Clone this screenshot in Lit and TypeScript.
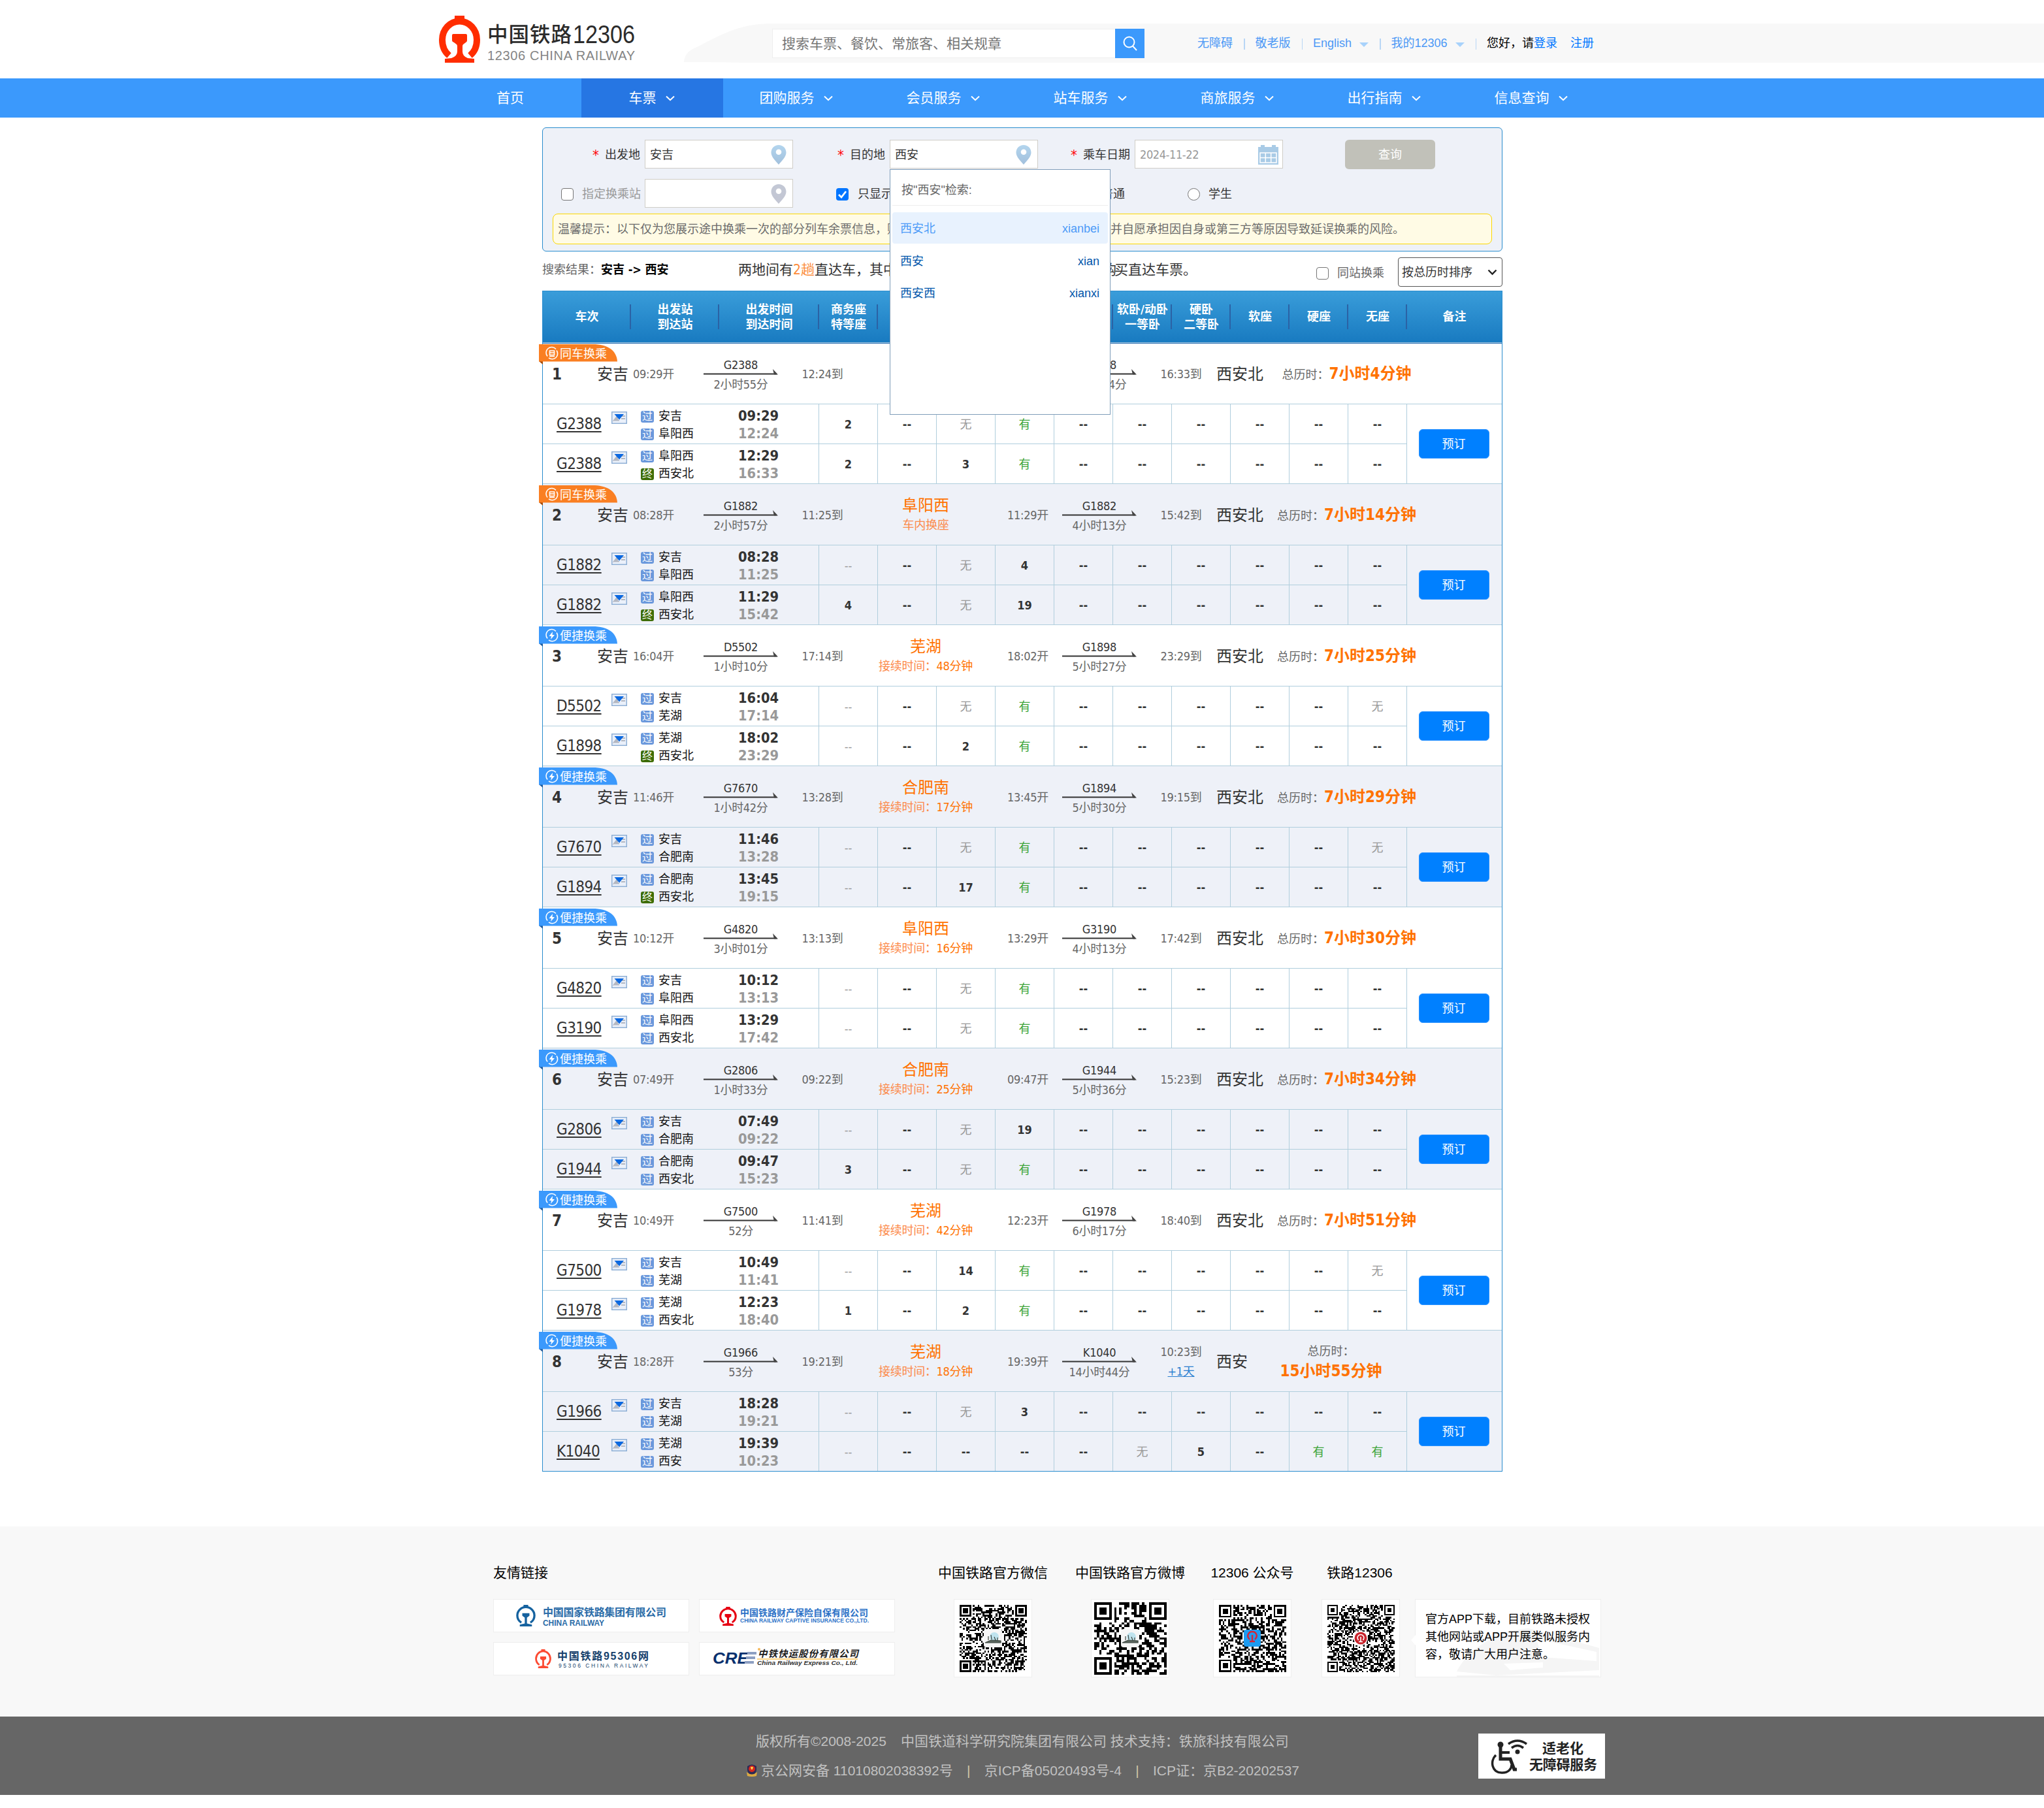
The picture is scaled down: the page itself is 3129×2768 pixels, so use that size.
import { LitElement, html, svg, css, nothing } from "lit";
import { customElement } from "lit/decorators.js";
import { classMap } from "lit/directives/class-map.js";

interface Leg {
  code: string;
  from: string;
  to: string;
  dep: string;
  arr: string;
  dur: string;
  end?: boolean;
  seats: string;
}
interface Plan {
  same?: boolean;
  via: string;
  wait: string;
  total: string;
  dest: string;
  nextDay?: boolean;
  legs: [Leg, Leg];
}

const leg = (code: string, from: string, to: string, dep: string, arr: string, dur: string, seats: string, end = false): Leg =>
  ({ code, from, to, dep, arr, dur, seats, end });

// Seat strings: "-" none, "~" faded none, "x" sold out, "o" plenty, otherwise a count.
const plans: Plan[] = [
  { same: true, via: "阜阳西", wait: "", total: "7小时4分钟", dest: "西安北", legs: [
    leg("G2388", "安吉", "阜阳西", "09:29", "12:24", "2小时55分", "2 - x o - - - - - -"),
    leg("G2388", "阜阳西", "西安北", "12:29", "16:33", "4小时04分", "2 - 3 o - - - - - -", true)] },
  { same: true, via: "阜阳西", wait: "", total: "7小时14分钟", dest: "西安北", legs: [
    leg("G1882", "安吉", "阜阳西", "08:28", "11:25", "2小时57分", "~ - x 4 - - - - - -"),
    leg("G1882", "阜阳西", "西安北", "11:29", "15:42", "4小时13分", "4 - x 19 - - - - - -", true)] },
  { via: "芜湖", wait: "48分钟", total: "7小时25分钟", dest: "西安北", legs: [
    leg("D5502", "安吉", "芜湖", "16:04", "17:14", "1小时10分", "~ - x o - - - - - x"),
    leg("G1898", "芜湖", "西安北", "18:02", "23:29", "5小时27分", "~ - 2 o - - - - - -", true)] },
  { via: "合肥南", wait: "17分钟", total: "7小时29分钟", dest: "西安北", legs: [
    leg("G7670", "安吉", "合肥南", "11:46", "13:28", "1小时42分", "~ - x o - - - - - x"),
    leg("G1894", "合肥南", "西安北", "13:45", "19:15", "5小时30分", "~ - 17 o - - - - - -", true)] },
  { via: "阜阳西", wait: "16分钟", total: "7小时30分钟", dest: "西安北", legs: [
    leg("G4820", "安吉", "阜阳西", "10:12", "13:13", "3小时01分", "~ - x o - - - - - -"),
    leg("G3190", "阜阳西", "西安北", "13:29", "17:42", "4小时13分", "~ - x o - - - - - -")] },
  { via: "合肥南", wait: "25分钟", total: "7小时34分钟", dest: "西安北", legs: [
    leg("G2806", "安吉", "合肥南", "07:49", "09:22", "1小时33分", "~ - x 19 - - - - - -"),
    leg("G1944", "合肥南", "西安北", "09:47", "15:23", "5小时36分", "3 - x o - - - - - -")] },
  { via: "芜湖", wait: "42分钟", total: "7小时51分钟", dest: "西安北", legs: [
    leg("G7500", "安吉", "芜湖", "10:49", "11:41", "52分", "~ - 14 o - - - - - x"),
    leg("G1978", "芜湖", "西安北", "12:23", "18:40", "6小时17分", "1 - 2 o - - - - - -")] },
  { via: "芜湖", wait: "18分钟", total: "15小时55分钟", dest: "西安", nextDay: true, legs: [
    leg("G1966", "安吉", "芜湖", "18:28", "19:21", "53分", "~ - x 3 - - - - - -"),
    leg("K1040", "芜湖", "西安", "19:39", "10:23", "14小时44分", "~ - - - - x 5 - o o")] },
];

const emblem = (color: string, w: number, h: number) => html`
  <svg width=${w} height=${h} viewBox="0 0 63 73" preserveAspectRatio="none" fill=${color}>
    <path d="M24 0h15v5l4 4H20l4-4z" />
    <path d="M15.500 61C7 54 5 45 5 37C5 21 17 8.500 31.500 8.500S58 21 58 37C58 45 56 54 47.500 61" fill="none" stroke=${color} stroke-width="10" />
    <path d="M22 28h19q2 0 2 2v8q0 2-2 3l-4 3q-1 1-1 3v8q0 7 8 10l10 1v6H9v-6l10-1q9-3 9-10v-8q0-2-1-3l-4-3q-3-1-3-3v-8q0-2 2-2z" />
  </svg>`;

const pin = (a: string, b: string, id: string) => html`
  <svg class="pin" width="24" height="30" viewBox="0 0 24 30">
    <defs><linearGradient id=${id} x1="0" y1="0" x2="0" y2="1"><stop offset="0" stop-color=${a} /><stop offset="1" stop-color=${b} /></linearGradient></defs>
    <path fill="url(#${id})" fill-rule="evenodd" d="M12 0C5.500 0 .5 5 .5 11.500C.5 18 7 24 12 30C17 24 23.500 18 23.500 11.500C23.500 5 18.500 0 12 0zM12 6.500a4.300 4.300 0 1 1 0 8.600a4.300 4.300 0 0 1 0-8.600z" />
  </svg>`;

const chevron = html`<svg width="14" height="9" viewBox="0 0 14 9" fill="none" stroke="#fff" stroke-width="2"><path d="M1 1.500L7 7.200L13 1.500" /></svg>`;

function qrCells(n: number, seed: number) {
  let s = seed;
  const rnd = () => ((s = (s * 1103515245 + 12345) & 0x7fffffff) >> 8) / 0x7fffff;
  let d = "";
  const clear = (x: number, y: number) => (x < 8 && y < 8) || (x >= n - 8 && y < 8) || (x < 8 && y >= n - 8);
  for (let y = 0; y < n; y++)
    for (let x = 0; x < n; x++) {
      const on = rnd() < 0.52;
      if (on && !clear(x, y)) d += `M${x} ${y}h1v1h-1z`;
    }
  for (const [x, y] of [[0, 0], [n - 7, 0], [0, n - 7]])
    d += `M${x} ${y}h7v7h-7zM${x + 1} ${y + 1}v5h5v-5zM${x + 2} ${y + 2}h3v3h-3z`;
  return d;
}

const qr = (n: number, seed: number, size: number, logo: unknown) => html`
  <svg width=${size} height=${size} viewBox="0 0 ${size} ${size}">
    <path transform="scale(${size / n})" d=${qrCells(n, seed)} shape-rendering="crispEdges" />
    ${logo}
  </svg>`;

const sceneLogo = (c: number) => svg`
  <rect x=${c - 14} y=${c - 14} width="28" height="28" rx="4" fill="#f6f6f6" />
  <circle cx=${c + 2} cy=${c - 2} r="7" fill="#bfe3ee" />
  <path transform="translate(${c - 12} ${c - 5})" d="M0 12L9 8L24 9V12zM5 2v6M9 0l1 7M14 3l2 5M19 4v4" fill="#58645c" stroke="#3c4640" stroke-width="1.200" />`;
const appLogo = (c: number) => svg`
  <rect x=${c - 13} y=${c - 13} width="26" height="26" rx="4" fill="#1c9cf2" />
  <path transform="translate(${c - 8} ${c - 11})" d="M4 13C-2 7 3 1 8 1S18 7 12 13M8 6v9M4 16h8" fill="none" stroke="#d3263a" stroke-width="2.400" />`;
const roundLogo = (c: number) => svg`
  <circle cx=${c} cy=${c} r="11" fill="#fff" /><circle cx=${c} cy=${c} r="9.500" fill="#c8232c" />
  <path transform="translate(${c - 6} ${c - 6})" d="M2.500 9C-1 4 3 .5 6 .5S13 4 9.500 9M6 4v7M3 11.500h6" fill="none" stroke="#fff" stroke-width="1.600" />`;

@customElement("top-bar")
class TopBar extends LitElement {
  static styles = css`
    :host { display: block; font-family: "Liberation Sans", "Noto Sans CJK SC", sans-serif; }
    .head { height: 120px; display: flex; padding-left: 672px; box-sizing: border-box; position: relative; background: #fff; }
    .logo { display: flex; padding-top: 24px; gap: 11px; width: 375px; }
    .narrow { font-family: "Liberation Sans Narrow", "Liberation Sans", sans-serif; }
    .band { flex: 1; height: 60px; margin-top: 36px; display: flex; align-items: center; position: relative; }
    .bandbg { position: absolute; inset: 0; width: 100%; height: 60px; }
    .search { position: relative; margin-left: 135px; display: flex; height: 45px; margin-top: 1px; }
    .q { width: 525px; box-sizing: border-box; background: #fff; border: 1px solid #eee; border-right: 0; font-size: 21px; line-height: 43px; color: #757575; padding-left: 14px; white-space: nowrap; }
    .go { width: 45px; background: #3b99fc; display: flex; align-items: center; justify-content: center; }
    .links { position: relative; display: flex; align-items: center; margin-left: 81px; font-size: 18px; line-height: 24px; color: #4c98f6; white-space: nowrap; }
    .sep { width: 1.500px; height: 17px; background: #b8d6f5; margin: 2px 16px 0 17px; }
    .tri { border: 7px solid transparent; border-top-color: #a8d2fb; border-bottom: 0; margin-left: 12px; margin-top: 4px; }
    .hi { color: #000; }
    .act { color: #0077ff; }
    .reg { margin-left: 20px; color: #0077ff; }
    .nav { height: 60px; background: #3b99fc; display: grid; grid-template-columns: 220px 217px repeat(6, 225px); padding-left: 670px; }
    .item { display: flex; align-items: center; justify-content: center; gap: 14px; color: #fff; font-size: 21px; line-height: 60px; white-space: nowrap; padding-right: 2px; }
    .item:first-child { padding: 0 0 0 2px; }
    .on { background: #2676e3; }
  `;
  render() {
    const items = ["首页", "车票", "团购服务", "会员服务", "站车服务", "商旅服务", "出行指南", "信息查询"];
    return html`
      <div class="head">
        <div class="logo">
          ${emblem("#ff2d00", 63, 73)}
          <svg width="230" height="73" viewBox="0 0 230 73">
            <text x="0" y="40" font-size="31.500" font-weight="500" textLength="129" fill="#2b2b2b">中国铁路</text>
            <text class="narrow" x="131" y="41.500" font-size="38" textLength="95" lengthAdjust="spacingAndGlyphs" fill="#2b2b2b">12306</text>
            <text class="narrow" x="0" y="67.500" font-size="20" textLength="226" fill="#858585">12306 CHINA RAILWAY</text>
          </svg>
        </div>
        <div class="band">
          <svg class="bandbg" viewBox="0 0 2082 60" preserveAspectRatio="none"><path fill="#f8f8f8" d="M0 59C2 42 12 40 24 34C62 14 90 0 134 0H2082V60H90Q40 59 0 59z" /></svg>
          <div class="search">
            <div class="q">搜索车票、餐饮、常旅客、相关规章</div>
            <div class="go"><svg width="22" height="23" viewBox="0 0 22 23" fill="none" stroke="#fff" stroke-width="2"><circle cx="9.500" cy="9.500" r="8" /><path d="M15 15.500L21 22" /></svg></div>
          </div>
          <div class="links">
            <span>无障碍</span><i class="sep"></i><span>敬老版</span><i class="sep"></i><span>English</span><i class="tri"></i><i class="sep"></i>
            <span>我的12306</span><i class="tri"></i><i class="sep"></i>
            <span class="hi">您好，请</span><span class="act">登录</span><span class="reg">注册</span>
          </div>
        </div>
      </div>
      <div class="nav">
        ${items.map((t, i) => html`<div class=${classMap({ item: true, on: i === 1 })}>${t}${i ? chevron : nothing}</div>`)}
      </div>`;
  }
}

@customElement("search-form")
class SearchForm extends LitElement {
  static styles = css`
    :host { display: block; position: relative; z-index: 5; font: 18px/24px "DejaVu Sans Condensed", "Noto Sans CJK SC", sans-serif; color: #333; }
    .box { box-sizing: border-box; height: 190px; border: 1px solid #298cce; border-radius: 6px; background: #eef1f8; padding-top: 18px; }
    .row { display: flex; align-items: center; height: 44px; margin-bottom: 16px; white-space: nowrap; }
    .row > span { flex: none; padding-top: 1px; }
    .lab { width: 148px; box-sizing: border-box; padding: 1px 7px 0 0; text-align: right; flex: none; }
    .lab.first { width: 156px; }
    .lab i { color: #f00; font-style: normal; margin-right: 9px; font-size: 22px; line-height: 20px; vertical-align: -2px; }
    .inp { width: 227px; height: 44px; flex: none; box-sizing: border-box; border: 1px solid #cfcdc7; background: #fff; display: flex; align-items: center; justify-content: space-between; padding: 1px 9px 0 7px; font-family: "Liberation Sans", "Noto Sans CJK SC", sans-serif; position: relative; }
    .date { color: #999; padding-right: 6px; font-family: "DejaVu Sans Condensed", sans-serif; letter-spacing: -.4px; }
    .query { width: 138px; height: 45px; line-height: 46px; border-radius: 6px; background: #c1c1b9; color: #fff; text-align: center; margin-left: 95px; }
    .cb { width: 19px; height: 19px; box-sizing: border-box; border: 1.500px solid #767676; border-radius: 4px; background: #fff; flex: none; margin-top: 2px; }
    .cb.on { background: #0075ff; border: 0; }
    .cb.on svg { display: block; }
    .cb.rd { border-radius: 50%; }
    .dim { color: #999; }
    .tip { box-sizing: border-box; height: 47px; margin: -7px 15px 0; border: 1px solid #fbd800; border-radius: 8px; background: #fffbe5; line-height: 46px; padding-left: 7px; color: #6b6b6b; white-space: nowrap; overflow: hidden; }
    .res { height: 60px; display: flex; align-items: center; white-space: nowrap; color: #666; }
    .res b { color: #000; }
    .res > * { flex: none; }
    .sum { font-size: 21px; color: #333; display: flex; }
    .or { color: #fc8b3a; }
    .mid { width: 459px; }
    .sel { box-sizing: border-box; width: 160px; height: 45px; border: 1px solid #555; border-radius: 4px; color: #333; font-family: "Liberation Sans", "Noto Sans CJK SC", sans-serif; display: flex; align-items: center; justify-content: space-between; padding: 0 7px 0 5px; }
    .drop { position: absolute; left: -1px; top: 44px; width: 338px; height: 376px; box-sizing: border-box; border: 1px solid #7f9db9; background: #fff; padding: 0 3px; color: #0055aa; }
    .dt { height: 54px; line-height: 62px; padding-left: 14px; color: #666; border-bottom: 1px solid #eee; margin-bottom: 10px; }
    .opt { height: 48px; line-height: 50px; margin-bottom: 1.500px; display: flex; justify-content: space-between; padding: 0 13px 0 12px; border-radius: 4px; }
    .opt.hl { background: #e8f2fe; color: #4c9bf8; }
  `;
  render() {
    const drop = html`<div class="drop">
      <div class="dt">按"西安"检索:</div>
      <div class="opt hl"><span>西安北</span><span>xianbei</span></div>
      <div class="opt"><span>西安</span><span>xian</span></div>
      <div class="opt"><span>西安西</span><span>xianxi</span></div>
    </div>`;
    const blue = (id: string) => pin("#b3d5ee", "#a2c0dc", id);
    return html`
      <div class="box">
        <div class="row">
          <div class="lab first"><i>*</i>出发地</div><div class="inp"><span>安吉</span>${blue("p1")}</div>
          <div class="lab"><i>*</i>目的地</div><div class="inp"><span>西安</span>${blue("p2")}${drop}</div>
          <div class="lab"><i>*</i>乘车日期</div>
          <div class="inp date"><span>2024-11-22</span>
            <svg width="31" height="30" viewBox="0 0 31 30"><path fill="#a9cbe6" d="M0 3h4V0h6v3h11V0h6v3h4v27H0z" /><g fill="none" stroke="#fff" stroke-width="1.500"><path d="M3 12h25v15H3zM11.300 12v15M19.700 12v15M3 19.500h25" /></g></svg>
          </div>
          <div class="query">查询</div>
        </div>
        <div class="row">
          <i class="cb" style="margin-left:28px"></i><span class="dim" style="width:95px;margin-left:13px">指定换乘站</span>
          <div class="inp" style="margin-left:1px"><span></span>${pin("#c3c8d5", "#c3c6d3", "p3")}</div>
          <i class="cb on" style="margin-left:66px"><svg width="19" height="19" viewBox="0 0 19 19" fill="none" stroke="#fff" stroke-width="2.800"><path d="M4 10l4 4l7-9" /></svg></i>
          <span style="margin-left:14px;width:341px">只显示余票充足的车次</span>
          <i class="cb rd"></i><span style="margin-left:13px;width:132px">普通</span>
          <i class="cb rd"></i><span style="margin-left:13px">学生</span>
        </div>
        <div class="tip">温馨提示：以下仅为您展示途中换乘一次的部分列车余票信息，购票前请您仔细阅读并确认换乘时间充裕，并自愿承担因自身或第三方等原因导致延误换乘的风险。</div>
      </div>
      <div class="res">
        <div style="width:300px;margin-top:-5px">搜索结果：<b>安吉 -&gt; 西安</b></div>
        <div class="sum" style="margin-top:-5px;width:885px"><span>两地间有<span class="or">2趟</span></span><span class="mid">直达车，其中部分车次仍有余票，您也可以优先购</span><span>买直达车票。</span></div>
        <i class="cb" style="margin-top:6px"></i><span style="margin:6px 0 0 13px;width:93px">同站换乘</span>
        <div class="sel" style="margin-top:3px">按总历时排序<svg width="15" height="10" viewBox="0 0 15 10" fill="none" stroke="#222" stroke-width="2.400"><path d="M1.500 1.500L7.500 7.500L13.500 1.500" /></svg></div>
      </div>`;
  }
}

@customElement("result-table")
class ResultTable extends LitElement {
  static styles = css`
    :host { display: block; font: 18px/24px "DejaVu Sans Condensed", "Noto Sans CJK SC", sans-serif; color: #333; }
    .table { box-sizing: border-box; border: 1px solid #298cce; border-top: 0; border-bottom: 0; }
    .thead { height: 80px; display: grid; grid-template-columns: 135px 135px 153px repeat(10, 90px) 1fr; background: linear-gradient(#3a9dda, #187ac0); position: relative; color: #fff; font-weight: bold; line-height: 22.500px; text-align: center; box-shadow: inset 0 1px #298cce; }
    .thead::after { content: ""; position: absolute; z-index: 1; left: 0; right: 0; bottom: -1px; height: 1px; background: #1a62a8; border-top: 1px solid #a6cde6; }
    .h { display: flex; align-items: center; justify-content: center; white-space: pre; position: relative; padding-top: 1px; }
    .h:not(:last-child)::after { content: ""; position: absolute; right: 0; top: 21px; height: 38px; width: 2px; background: #2b62a5; }
    .g { position: relative; height: 216px; background: #fff; }
    .g.alt { background: #eef1f8; }
    .g:last-child::after { content: ""; position: absolute; left: 0; right: 0; bottom: 0; height: 1px; background: #298cce; }
    .badge { position: absolute; left: -6px; top: 2px; z-index: 2; }
    .s { height: 94px; box-sizing: border-box; padding-top: 2px; border-bottom: 1px solid #b0cedd; display: flex; align-items: center; white-space: nowrap; letter-spacing: -.3px; color: #666; }
    .n { width: 68px; padding-left: 14px; margin-right: 1px; font-size: 24px; font-weight: bold; color: #333; }
    .st { font-size: 24px; color: #333; letter-spacing: 0; }
    .ar { width: 112px; display: flex; flex-direction: column; align-items: center; line-height: 21px; padding-top: 1px; }
    .ar svg { display: block; margin: -4px 0 4px; }
    .ar .c { color: #333; }
    .via { width: 250px; text-align: center; color: #fc8a4a; line-height: 30px; padding-top: 1px; }
    .via div { font-size: 24px; color: #ff7200; letter-spacing: 0; }
    .via em { font-style: normal; color: #ff7200; }
    .arr { width: 64px; text-align: center; line-height: 30px; }
    .day { color: #2a7fd0; text-decoration: underline; }
    .tot { width: 213px; text-align: center; line-height: 30px; white-space: nowrap; letter-spacing: 0; }
    .tot b { font-size: 24px; color: #ff7200; }
    .d { display: grid; grid-template-columns: 423px repeat(10, 90px) 1fr; grid-template-rows: 61px 61px; }
    .tr, .c1, .b { box-sizing: border-box; border-bottom: 1px solid #b0cedd; }
    .tr, .c1 { border-right: 1px solid #b0cedd; }
    .b { grid-column: 12; grid-row: 1 / 3; display: flex; align-items: center; justify-content: center; }
    .btn { width: 108px; height: 45px; line-height: 44px; margin-right: 2px; box-sizing: border-box; border: 1px solid #2a92ff; border-radius: 6px; background: #0080ff; color: #fff; text-align: center; }
    .tr { display: flex; padding-left: 21px; }
    .no { width: 84px; font-size: 24px; line-height: 61px; letter-spacing: -.6px; text-decoration: underline; text-decoration-thickness: 2px; text-underline-offset: 3px; }
    .ex { margin-top: 11px; margin-right: 21px; display: block; }
    .two { display: flex; flex-direction: column; padding-top: 4px; width: 149px; line-height: 27px; }
    .two div { display: flex; align-items: center; gap: 7px; color: #111; }
    .tag { width: 20px; height: 18px; line-height: 17px; border-radius: 3px; background: #6a98dc; color: #fff; font-size: 16px; text-align: center; margin-top: 2px; }
    .tag.end { background: #3e6d06; }
    .tm { font-size: 21.700px; font-weight: bold; line-height: 27px; padding-top: 4px; }
    .tm div + div { color: #999; }
    .c1 { text-align: center; line-height: 61px; font-weight: bold; color: #333; }
    .c1.no1, .c1.fade { color: #999; font-weight: normal; }
    .c1.yes { color: #3fa53a; font-weight: normal; }
  `;

  badge(p: Plan) {
    const [main, fold] = p.same ? ["#fa7f22", "#a34700"] : ["#3b99fc", "#1d5a9c"];
    return html`<svg class="badge" width="121" height="32" viewBox="0 0 121 32">
      <path fill=${fold} d="M0 26H6V31z" />
      <path fill=${main} d="M0 0H82C106 0 119 10 120 26.500H0z" />
      <g fill="none" stroke="#fff" stroke-width="1.600"><path d="M26 7.500A8.300 8.300 0 0 0 13 18.500M15 20.800A8.300 8.300 0 0 0 27 9.500" />
      ${p.same ? svg`<path d="M16.500 10h7v6.500h-7zM16.500 13h7M16 18.500h8" />` : svg`<path fill="#fff" stroke="none" d="M21 8l-5.500 7h3.500l-1 5l6-7h-3.500z" />`}</g>
      <text x="32" y="20.500" font-size="18" textLength="72" fill="#fff">${p.same ? "同车换乘" : "便捷换乘"}</text>
    </svg>`;
  }

  arrow(l: Leg) {
    return html`<div class="ar"><span class="c">${l.code}</span>
      <svg width="114" height="9" viewBox="0 0 114 9"><path d="M0 7.500h112" stroke="#333" stroke-width="2" /><path d="M106 0L114 8.500H108z" fill="#444" /></svg>
      <span>${l.dur}</span></div>`;
  }

  seat(v: string) {
    const cls = { c1: true, no1: v === "x", fade: v === "~", yes: v === "o" };
    const text = v === "-" || v === "~" ? "--" : v === "x" ? "无" : v === "o" ? "有" : v;
    return html`<div class=${classMap(cls)}>${text}</div>`;
  }

  legRow(l: Leg) {
    return html`<div class="tr">
        <span class="no">${l.code}</span>
        <svg class="ex" width="24" height="19" viewBox="0 0 24 19"><path d="M.75.75h22.500v17.500H.75z" fill="#eaf0fa" stroke="#8fb0d6" stroke-width="1.500" /><path d="M4 13.500L9 7v5zM3 13.500h9M15 7h6M15 11h6" stroke="#b4b8c2" stroke-width="2" fill="#b4b8c2" /><path d="M4.500 4h14.500l-7 8.500z" fill="#0b68e0" /></svg>
        <div class="two"><div><span class="tag">过</span>${l.from}</div><div><span class=${classMap({ tag: true, end: !!l.end })}>${l.end ? "终" : "过"}</span>${l.to}</div></div>
        <div class="tm"><div>${l.dep}</div><div>${l.arr}</div></div>
      </div>
      ${l.seats.split(" ").map((v) => this.seat(v))}`;
  }

  render() {
    const heads = ["车次", "出发站\n到达站", "出发时间\n到达时间", "商务座\n特等座", "优选\n一等座", "一等座", "二等座\n二等包座", "高级\n软卧", "软卧/动卧\n一等卧", "硬卧\n二等卧", "软座", "硬座", "无座", "备注"];
    return html`<div class="table">
      <div class="thead">${heads.map((t) => html`<div class="h">${t}</div>`)}</div>
      <div>${plans.map((p, i) => {
        const [a, b] = p.legs;
        return html`<div class=${classMap({ g: true, alt: i % 2 === 1 })}>
          ${this.badge(p)}
          <div class="s">
            <span class="n">${i + 1}</span>
            <span class="st" style="width:55px">${a.from}</span>
            <span style="width:109px">${a.dep}开</span>
            ${this.arrow(a)}
            <span class="arr" style="margin-left:37px">${a.arr}到</span>
            <div class="via" style="margin-left:1px"><div>${p.via}</div>${p.same ? "车内换座" : html`接续时间：<em>${p.wait}</em>`}</div>
            <span style="width:85px">${b.dep}开</span>
            ${this.arrow(b)}
            <span class="arr" style="margin:0 22px 0 37px">${b.arr}到${p.nextDay ? html`<br /><span class="day">+1天</span>` : nothing}</span>
            <span class="st" style="margin-right:21px">${p.dest}</span>
            <div class="tot">总历时：${p.nextDay ? html`<br />` : nothing}<b>${p.total}</b></div>
          </div>
          <div class="d">${this.legRow(a)}${this.legRow(b)}<div class="b"><div class="btn">预订</div></div></div>
        </div>`;
      })}</div>
    </div>`;
  }
}

@customElement("page-foot")
class PageFoot extends LitElement {
  static styles = css`
    :host { display: block; font: 21px/30px "Liberation Sans", "Noto Sans CJK SC", sans-serif; color: #000; }
    .links { height: 291px; box-sizing: border-box; background: #f8f8f8; padding: 56px 0 0 755px; display: flex; }
    .fl { width: 666px; }
    .grid { display: grid; grid-template-columns: 300px 300px; gap: 15px; margin-top: 25px; }
    .card { height: 51px; box-sizing: border-box; border: 1px solid #eee; background: #fff; display: flex; }
    .card svg { flex: none; }
    .qr { text-align: center; white-space: nowrap; }
    .pic { width: 120px; height: 120px; box-sizing: border-box; border: 1px solid #eee; background: #fff; margin: 25px auto 0; display: flex; align-items: center; justify-content: center; }
    .app { margin: 55px 0 0 10px; width: 285px; height: 120px; box-sizing: border-box; border: 1px solid #eee; background: #fff; font-size: 18px; line-height: 27px; padding: 17px 14px 0 15px; white-space: nowrap; position: relative; }
    .app span { position: relative; }
    .train { position: absolute; right: 0; bottom: 0; }
    .notch { position: absolute; left: -8px; top: 53px; }
    .legal { height: 120px; background: #666; color: #c1c1c1; display: flex; padding-left: 1142px; margin-bottom: 20px; }
    .lines { width: 1121px; white-space: nowrap; padding-top: 23px; flex: none; }
    .l1 { padding-left: 15px; }
    .l2 { margin-top: 15px; display: flex; align-items: center; }
    .l2 svg { margin-right: 5px; }
    .bar { width: 48px; text-align: center; color: #d0c6a8; }
    .acc { width: 194px; height: 69px; background: #fff; margin-top: 26px; }
    .narrow { font-family: "Liberation Sans Narrow", "Liberation Sans", sans-serif; }
  `;
  render() {
    return html`
      <div class="links">
        <div class="fl">友情链接
          <div class="grid">
            <div class="card"><svg width="297" height="48">
              <g transform="translate(34 8)">${this.mini("#15629f", 30 / 63, 33 / 73)}</g>
              <text x="75" y="25" font-size="16" font-weight="bold" textLength="189" fill="#2b6ca8">中国国家铁路集团有限公司</text>
              <text class="narrow" x="75" y="40" font-size="13.500" font-weight="bold" textLength="94" lengthAdjust="spacingAndGlyphs" fill="#2b6ca8">CHINA RAILWAY</text></svg></div>
            <div class="card"><svg width="297" height="48">
              <g transform="translate(30 11)">${this.mini("#e60012", 27 / 63, 29 / 73)}</g>
              <text x="62" y="25" font-size="14" font-weight="bold" textLength="196" fill="#2c72c7">中国铁路财产保险自保有限公司</text>
              <text x="62" y="35" font-size="9.500" font-weight="bold" textLength="197" lengthAdjust="spacingAndGlyphs" fill="#2c72c7">CHINA RAILWAY CAPTIVE INSURANCE CO.,LTD.</text></svg></div>
            <div class="card"><svg width="297" height="48">
              <g transform="translate(63 10)">${this.mini("#fc4a32", 25 / 63, 29 / 73)}</g>
              <text x="97" y="26" font-size="16" font-weight="bold" textLength="140" fill="#153f6c">中国铁路95306网</text>
              <text class="narrow" x="99" y="38" font-size="8.500" textLength="137" fill="#153f6c">95306 CHINA RAILWAY</text></svg></div>
            <div class="card"><svg width="297" height="48">
              <text x="20" y="32" font-size="24" font-weight="bold" font-style="italic" textLength="55" lengthAdjust="spacingAndGlyphs" fill="#07306e">CRE</text>
              <path d="M73 16h14M71 23h14M69 30h14" stroke="#8d9fc2" stroke-width="4" /><path d="M88 25h154" stroke="#fcc458" stroke-width="1.500" />
              <circle cx="91" cy="10" r="2" fill="#f5b95a" />
              <text x="89" y="22" font-size="14.500" font-weight="bold" font-style="italic" textLength="154" fill="#1c1c1c">中铁快运股份有限公司</text>
              <text x="88" y="34" font-size="8.500" font-weight="bold" font-style="italic" textLength="154" lengthAdjust="spacingAndGlyphs" fill="#333">China Railway Express Co., Ltd.</text></svg></div>
          </div>
        </div>
        <div class="qr" style="width:198px">中国铁路官方微信<div class="pic">${qr(41, 77, 103, sceneLogo(51))}</div></div>
        <div class="qr" style="width:222px">中国铁路官方微博<div class="pic">${qr(29, 1234, 111, sceneLogo(55))}</div></div>
        <div class="qr" style="width:152px">12306 公众号<div class="pic">${qr(37, 991, 103, appLogo(51))}</div></div>
        <div class="qr" style="width:149px;margin-left:14px">铁路12306<div class="pic" style="margin-left:16px">${qr(45, 4242, 103, roundLogo(51))}</div></div>
        <div class="app">
          <svg class="train" width="220" height="78" viewBox="0 0 220 78"><path fill="#f5f5f5" d="M0 70C20 30 70 6 110 4L218 34V68L60 76zM0 76h218v2H0z" /><path fill="#fff" d="M122 20l92 20v14l-84-6zM72 58l60-2v8l-50 4z" /></svg>
          <svg class="notch" width="9" height="18" viewBox="0 0 9 18"><path d="M9 0L1 9l8 9z" fill="#fff" /></svg>
          <span>官方APP下载，目前铁路未授权<br />其他网站或APP开展类似服务内<br />容，敬请广大用户注意。</span>
        </div>
      </div>
      <div class="legal">
        <div class="lines">
          <div class="l1">版权所有©2008-2025<span style="margin-left:22px">中国铁道科学研究院集团有限公司 技术支持：铁旅科技有限公司</span></div>
          <div class="l2"><svg width="18" height="20" viewBox="0 0 18 20"><path d="M2 3Q9-2 16 3V9Q15 15 9 17Q3 15 2 9z" fill="#2d2a55" /><circle cx="9" cy="7" r="5" fill="#d8261c" /><path d="M7 4h4l-1 4H8z" fill="#fbd24b" /><path d="M1 12Q9 19 17 12L16 18Q9 20 2 18z" fill="#dba941" /></svg><span>京公网安备 11010802038392号</span><span class="bar">|</span><span>京ICP备05020493号-4</span><span class="bar">|</span><span>ICP证：京B2-20202537</span></div>
        </div>
        <div class="acc"><svg width="194" height="69" viewBox="0 0 194 69">
          <g fill="none" stroke="#222" stroke-width="4"><path d="M34 21V39H49L55 55H59" stroke-width="5" /><path d="M35 29H48" stroke-width="4" /><path d="M27 33C17 42 21 61 37 60C46 60 51 54 51 48" stroke-width="3.500" /><path d="M46 16Q60 6 74 16M51 22Q60 15 69 22" stroke-width="3.500" /></g>
          <circle cx="34" cy="17" r="4.500" fill="#222" /><circle cx="60" cy="28" r="3.500" fill="#222" />
          <text x="98" y="30" font-size="21" font-weight="bold" textLength="63" fill="#222">适老化</text>
          <text x="78" y="55" font-size="21" font-weight="bold" textLength="104" fill="#222">无障碍服务</text>
        </svg></div>
      </div>`;
  }
  mini(c: string, sx: number, sy: number) {
    return svg`<g transform="scale(${sx} ${sy})" fill=${c}><path d="M24 0h15v5l4 4H20l4-4z" /><path d="M17 60C7 54 4 45 4 36C4 20 17 7.500 31.500 7.500S59 20 59 36C59 45 56 54 46 60" fill="none" stroke=${c} stroke-width="7" /><path d="M20 28h23v9l-8 6v20l16 4v6H12v-6l16-4V43l-8-6z" /></g>`;
  }
}

@customElement("app-root")
class AppRoot extends LitElement {
  static styles = css`
    :host { display: block; width: 3129px; height: 2768px; background: #fff; overflow: hidden; }
    .main { width: 1470px; margin-left: 830px; padding-top: 15px; height: 2157px; box-sizing: border-box; }
  `;
  render() {
    return html`<top-bar></top-bar>
      <div class="main"><search-form></search-form><result-table></result-table></div>
      <page-foot></page-foot>`;
  }
}
